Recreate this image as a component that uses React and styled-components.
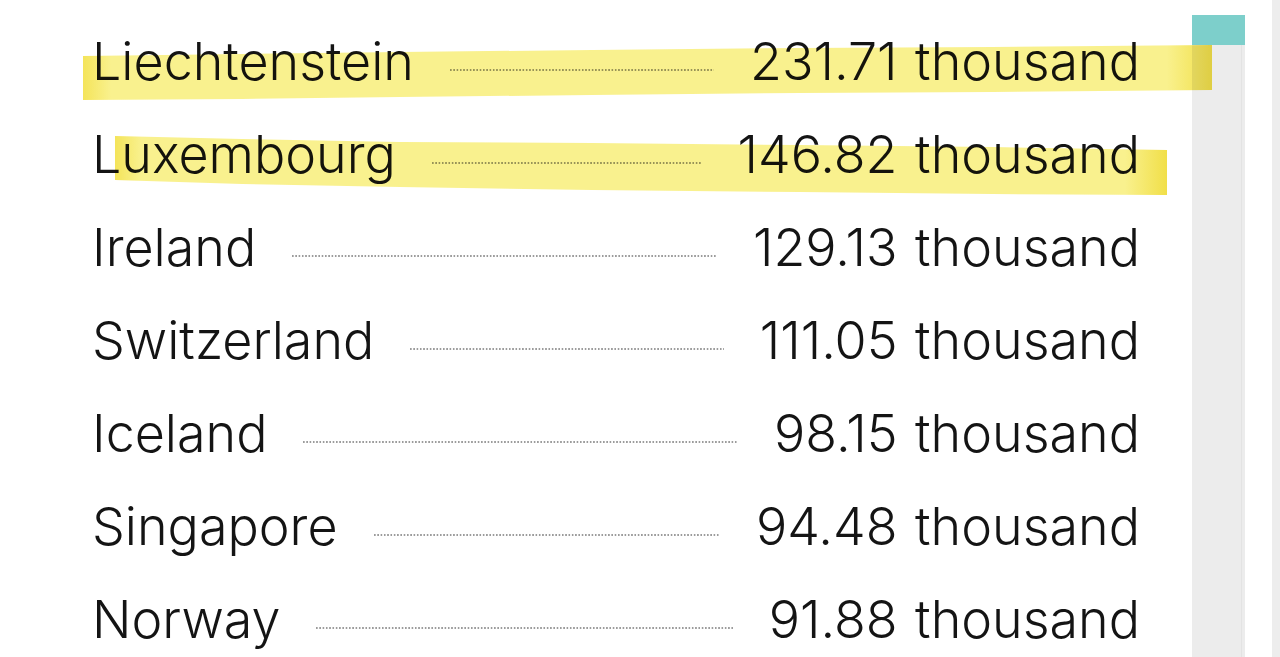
import React from 'react'
import styled, { createGlobalStyle } from 'styled-components'

const GlobalStyle = createGlobalStyle`
    html, body {
        margin: 0;
        padding: 0;
        background: #ffffff;
    }
    body {
        font-family: Inter, Lato, "Liberation Sans", sans-serif;
        color: #141414;
    }
`

const Page = styled.div`
    display: flex;
    height: 657px;
    overflow: hidden;
    background: #ffffff;
`

const List = styled.div`
    box-sizing: border-box;
    width: 1140px;
    padding: 15px 0 0 92px;
    display: flex;
    flex-direction: column;
`

const Row = styled.div`
    position: relative;
    display: flex;
    align-items: center;
    height: 93px;
    font-size: 52px;
    font-weight: 300;
    line-height: 93px;
    white-space: nowrap;
`

const Name = styled.span`
    position: relative;
    z-index: 1;
`

const Value = styled.span`
    position: relative;
    z-index: 1;
    word-spacing: 3px;
`

const Leader = styled.span`
    flex: 1;
    height: 2px;
    margin: 17px 36px 0 36px;
    background-image: linear-gradient(to right, #8a8a8a 0 1.6px, transparent 1.6px 3.3px);
    background-size: 3.3px 2px;
    background-repeat: repeat-x;
    opacity: 0.85;
`

const Marker = styled.svg`
    position: absolute;
    left: 0;
    top: 0;
    width: 100%;
    height: 100%;
    overflow: visible;
    z-index: 3;
    mix-blend-mode: multiply;
    pointer-events: none;
`

const Track = styled.div`
    width: 53px;
    margin: 15px 0 0 52px;
    background: #ececec;
    box-shadow: inset -3px 0 0 #ececec, inset -4px 0 0 #e3e3e3;
    display: flex;
    flex-direction: column;
`

const Thumb = styled.div`
    height: 30px;
    background: #7dcfcb;
`

const Edge = styled.div`
    width: 8px;
    margin-left: auto;
    background: #ededed;
`

const rows = [
    { name: 'Liechtenstein', value: '231.71 thousand', mark: '-9,41 150,39 308,37 500,35 708,33 900,32 1120,30 1120,75 900,77 708,78 500,80 308,82 150,84 -9,85' },
    { name: 'Luxembourg', value: '146.82 thousand', mark: '23,28 150,31 308,34 500,35 708,37 900,39 1075,42 1075,87 900,86 708,84 500,82 308,79 150,76 23,72' },
    { name: 'Ireland', value: '129.13 thousand' },
    { name: 'Switzerland', value: '111.05 thousand' },
    { name: 'Iceland', value: '98.15 thousand' },
    { name: 'Singapore', value: '94.48 thousand' },
    { name: 'Norway', value: '91.88 thousand' },
]

function Highlight({ points, id }) {
    return (
        <Marker>
            <defs>
                <linearGradient id={id} x1="0" x2="1" y1="0" y2="0">
                    <stop offset="0" stopColor="#f4e45a" />
                    <stop offset="0.025" stopColor="#f9f18e" />
                    <stop offset="0.96" stopColor="#f9f18e" />
                    <stop offset="1" stopColor="#f1df48" />
                </linearGradient>
            </defs>
            <polygon points={points} fill={`url(#${id})`} />
        </Marker>
    )
}

export default function App() {
    return (
        <React.Fragment>
            <GlobalStyle />
            <Page>
                <List>
                    {rows.map((r, i) => (
                        <Row key={r.name}>
                            {r.mark && <Highlight points={r.mark} id={'hl' + i} />}
                            <Name>{r.name}</Name>
                            <Leader />
                            <Value>{r.value}</Value>
                        </Row>
                    ))}
                </List>
                <Track>
                    <Thumb />
                </Track>
                <Edge />
            </Page>
        </React.Fragment>
    )
}
